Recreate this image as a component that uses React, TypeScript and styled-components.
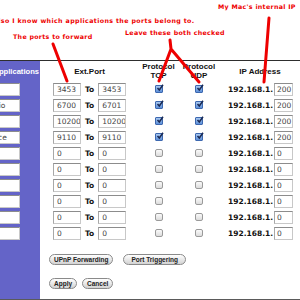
import React from "react";
import styled, { createGlobalStyle } from "styled-components";

const GlobalStyle = createGlobalStyle`
  html, body {
    margin: 0;
    padding: 0;
    background: #fff;
    overflow: hidden;
  }
`;

type PortRow = {
  app: string;
  from: string;
  to: string;
  tcp: boolean;
  udp: boolean;
  ip: string;
};

const rows: PortRow[] = [
  { app: "Bonjour", from: "3453", to: "3453", tcp: true, udp: true, ip: "200" },
  { app: "iChat Audio", from: "6700", to: "6701", tcp: true, udp: true, ip: "200" },
  { app: "iChat", from: "10200", to: "10200", tcp: true, udp: true, ip: "200" },
  { app: "NAT Service", from: "9110", to: "9110", tcp: true, udp: true, ip: "200" },
  { app: "", from: "0", to: "0", tcp: false, udp: false, ip: "0" },
  { app: "", from: "0", to: "0", tcp: false, udp: false, ip: "0" },
  { app: "", from: "0", to: "0", tcp: false, udp: false, ip: "0" },
  { app: "", from: "0", to: "0", tcp: false, udp: false, ip: "0" },
  { app: "", from: "0", to: "0", tcp: false, udp: false, ip: "0" },
  { app: "", from: "0", to: "0", tcp: false, udp: false, ip: "0" },
];

const CheckBox = ({ checked }: { checked: boolean }) => (
  <Box checked={checked}>
    {checked && (
      <svg width="8" height="8" viewBox="0 0 8 8">
        <path d="M1.5 4 L3.3 6 L7 0.8" stroke="#1a2a55" strokeWidth="1.5" fill="none" />
      </svg>
    )}
  </Box>
);

const App = () => {
  return (
    <Page>
      <GlobalStyle />
      <NoteBand />
      <Form>
        <Sidebar>
          <SideHead>Applications</SideHead>
          {rows.map((r, i) => (
            <SideRow key={i}>
              <AppInput readOnly value={r.app} />
            </SideRow>
          ))}
        </Sidebar>
        <Main>
          <Grid>
            <HeadCell>
              <PortHead>Ext.Port</PortHead>
            </HeadCell>
            <HeadCell center>
              Protocol
              <br />
              TCP
            </HeadCell>
            <HeadCell center>
              Protocol
              <br />
              UDP
            </HeadCell>
            <HeadCell>
              <IpHead>IP Address</IpHead>
            </HeadCell>
            {rows.map((r, i) => (
              <React.Fragment key={i}>
                <Cell>
                  <PortInput readOnly value={r.from} />
                  <ToLabel>To</ToLabel>
                  <PortInput readOnly value={r.to} />
                </Cell>
                <Cell center>
                  <CheckBox checked={r.tcp} />
                </Cell>
                <Cell center>
                  <CheckBox checked={r.udp} />
                </Cell>
                <IpCell>
                  <IpLabel>192.168.1.</IpLabel>
                  <IpInput readOnly value={r.ip} />
                </IpCell>
              </React.Fragment>
            ))}
          </Grid>
          <ButtonRow>
            <PillButton>UPnP Forwarding</PillButton>
            <PillButton wide>Port Triggering</PillButton>
          </ButtonRow>
          <ButtonRow>
            <PillButton>Apply</PillButton>
            <PillButton>Cancel</PillButton>
          </ButtonRow>
        </Main>
      </Form>

      <Scribbles width="300" height="300" viewBox="0 0 300 300">
        <g stroke="#ee0000" strokeWidth="3" fill="none" strokeLinecap="round" strokeLinejoin="round">
          <path d="M53 44 L67 81" />
          <path d="M170 40 L171 49 L159 81 M171 49 L199 82" />
          <path d="M269 18 L264 82" />
        </g>
      </Scribbles>
      <Note x={218} y={2}>My Mac's internal IP</Note>
      <Note x={-7} y={16} spread={0.38}>
        Also I know which applications the ports belong to.
      </Note>
      <Note x={125} y={28}>Leave these both checked</Note>
      <Note x={13} y={32}>The ports to forward</Note>
    </Page>
  );
};

export default App;

const Page = styled.div`
  position: relative;
  width: 300px;
  height: 300px;
  overflow: hidden;
  background: #fff;
`;

const NoteBand = styled.div`
  height: 60px;
`;

const Form = styled.div`
  display: flex;
  height: 238px;
  border-top: 1px solid #2e2e2e;
  border-bottom: 1px solid #5a5a5a;
`;

const Sidebar = styled.div`
  width: 40px;
  flex: none;
  background: #6464c8;
  overflow: hidden;
`;

const SideHead = styled.div`
  height: 20px;
  display: flex;
  align-items: center;
  justify-content: flex-end;
  padding-right: 1px;
  white-space: nowrap;
  color: #fff;
  font: bold 7.6px "Liberation Sans", Arial, sans-serif;
`;

const SideRow = styled.div`
  height: 16px;
  display: flex;
  align-items: center;
`;

const inputBase = `
  box-sizing: border-box;
  height: 13px;
  padding: 0 0 0 3px;
  margin: 0;
  background: #fff;
  border: 1px solid #c8c8c8;
  border-top-color: #8c8c8c;
  border-left-color: #a8a8a8;
  color: #444;
  font: 7.5px "DejaVu Sans", Verdana, sans-serif;
  outline: none;
`;

const AppInput = styled.input`
  ${inputBase}
  width: 62px;
  margin-left: -42px;
`;

const Main = styled.div`
  flex: 1;
  padding-left: 9px;
`;

const Grid = styled.div`
  display: grid;
  grid-template-columns: 85px 41px 40px auto;
  grid-template-rows: 20px;
  grid-auto-rows: 16px;
  margin-left: 4px;
`;

const HeadCell = styled.div<{ center?: boolean }>`
  display: flex;
  flex-direction: column;
  align-items: ${(p) => (p.center ? "center" : "flex-start")};
  justify-content: center;
  text-align: center;
  white-space: nowrap;
  color: #111;
  font: bold 8px/9px "Liberation Sans", Arial, sans-serif;
`;

const PortHead = styled.span`
  width: 73px;
  text-align: center;
`;

const IpHead = styled.span`
  width: 62px;
  margin-left: 10px;
  text-align: center;
`;

const Cell = styled.div<{ center?: boolean }>`
  display: flex;
  align-items: center;
  justify-content: ${(p) => (p.center ? "center" : "flex-start")};
`;

const PortInput = styled.input`
  ${inputBase}
  width: 28px;
`;

const ToLabel = styled.span`
  margin: 0 4px;
  color: #111;
  font: bold 7.5px "DejaVu Sans", Verdana, sans-serif;
`;

const Box = styled.span<{ checked: boolean }>`
  box-sizing: border-box;
  width: 8px;
  height: 8px;
  display: flex;
  align-items: center;
  justify-content: center;
  border-radius: ${(p) => (p.checked ? "1px" : "2px")};
  border: 1px solid ${(p) => (p.checked ? "#3d68b0" : "#9a9a9a")};
  background: ${(p) =>
    p.checked
      ? "linear-gradient(#a9c8f0, #5d8fd8)"
      : "linear-gradient(#fafafa, #dcdcdc)"};
  svg {
    margin-top: -2px;
    margin-right: -2px;
  }
`;

const IpCell = styled.div`
  display: flex;
  align-items: center;
  padding-left: 9px;
`;

const IpLabel = styled.span`
  width: 46px;
  color: #111;
  font: bold 7.5px "DejaVu Sans", Verdana, sans-serif;
  white-space: nowrap;
`;

const IpInput = styled.input`
  ${inputBase}
  width: 19px;
  padding-left: 2px;
`;

const ButtonRow = styled.div`
  display: flex;
  gap: 10px;
  margin-top: 13px;
  &:last-child {
    gap: 5px;
    margin-top: 13px;
  }
`;

const PillButton = styled.button<{ wide?: boolean }>`
  box-sizing: border-box;
  height: 11px;
  padding: 0 ${(p) => (p.wide ? "7px" : "4px")};
  border: 1px solid #8a8a8a;
  border-radius: 6px;
  background: linear-gradient(#ffffff, #e4e4e4 60%, #d2d2d2);
  color: #222;
  font: bold 6.5px/9px "Liberation Sans", Arial, sans-serif;
  white-space: nowrap;
`;

const Scribbles = styled.svg`
  position: absolute;
  left: 0;
  top: 0;
  pointer-events: none;
`;

const Note = styled.div<{ x: number; y: number; spread?: number }>`
  position: absolute;
  left: ${(p) => p.x}px;
  top: ${(p) => p.y}px;
  color: #ee0000;
  font: bold 6.3px/9px "DejaVu Sans", Verdana, sans-serif;
  letter-spacing: ${(p) => p.spread ?? 0.3}px;
  white-space: nowrap;
`;
